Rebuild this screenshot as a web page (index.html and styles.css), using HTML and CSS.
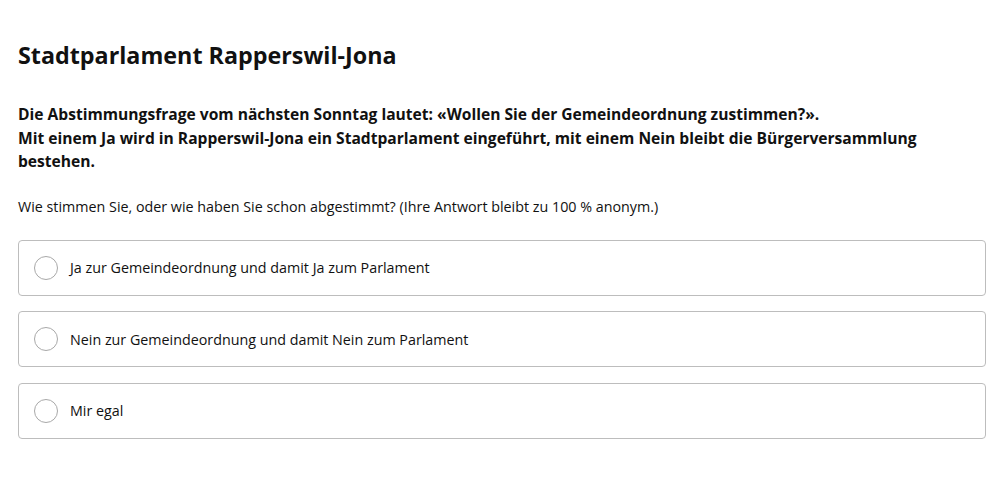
FILE: index.html
```html
<!DOCTYPE html>
<html lang="de">
<head>
<meta charset="utf-8">
<link rel="stylesheet" href="styles.css">
</head>
<body>
<main class="poll">
  <h1 class="title">Stadtparlament Rapperswil-Jona</h1>
  <p class="lead">Die Abstimmungsfrage vom nächsten Sonntag lautet: «Wollen Sie der Gemeindeordnung zustimmen?».<br>Mit einem Ja wird in Rapperswil-Jona ein Stadtparlament eingeführt, mit einem Nein bleibt die Bürgerversammlung bestehen.</p>
  <p class="question">Wie stimmen Sie, oder wie haben Sie schon abgestimmt? (Ihre Antwort bleibt zu 100 % anonym.)</p>
  <div class="options">
    <label class="option"><span class="radio"></span><span class="label">Ja zur Gemeindeordnung und damit Ja zum Parlament</span></label>
    <label class="option"><span class="radio"></span><span class="label">Nein zur Gemeindeordnung und damit Nein zum Parlament</span></label>
    <label class="option"><span class="radio"></span><span class="label">Mir egal</span></label>
  </div>
</main>
</body>
</html>
```
FILE: styles.css
```css
html, body {
  margin: 0;
  padding: 0;
  background: #fff;
}
body {
  font-family: "Open Sans", "Liberation Sans", sans-serif;
  color: #111;
}
.poll {
  padding: 38px 14px 0 18px;
}
.title {
  margin: 0;
  font-size: 23.3px;
  font-weight: 700;
  line-height: 34px;
}
.lead {
  margin: 31px 0 0;
  font-size: 15.6px;
  font-weight: 700;
  line-height: 23.5px;
}
.question {
  margin: 23px 0 0;
  font-size: 14.3px;
  line-height: 20px;
}
.options {
  margin-top: 23px;
  display: flex;
  flex-direction: column;
  gap: 15.5px;
}
.option {
  display: flex;
  align-items: center;
  height: 54px;
  border: 1px solid #bdbdbd;
  border-radius: 4px;
  padding-left: 15px;
}
.radio {
  width: 22px;
  height: 22px;
  border: 1px solid #a8a8a8;
  border-radius: 50%;
  flex: none;
}
.label {
  margin-left: 12px;
  font-size: 14.3px;
}
```
